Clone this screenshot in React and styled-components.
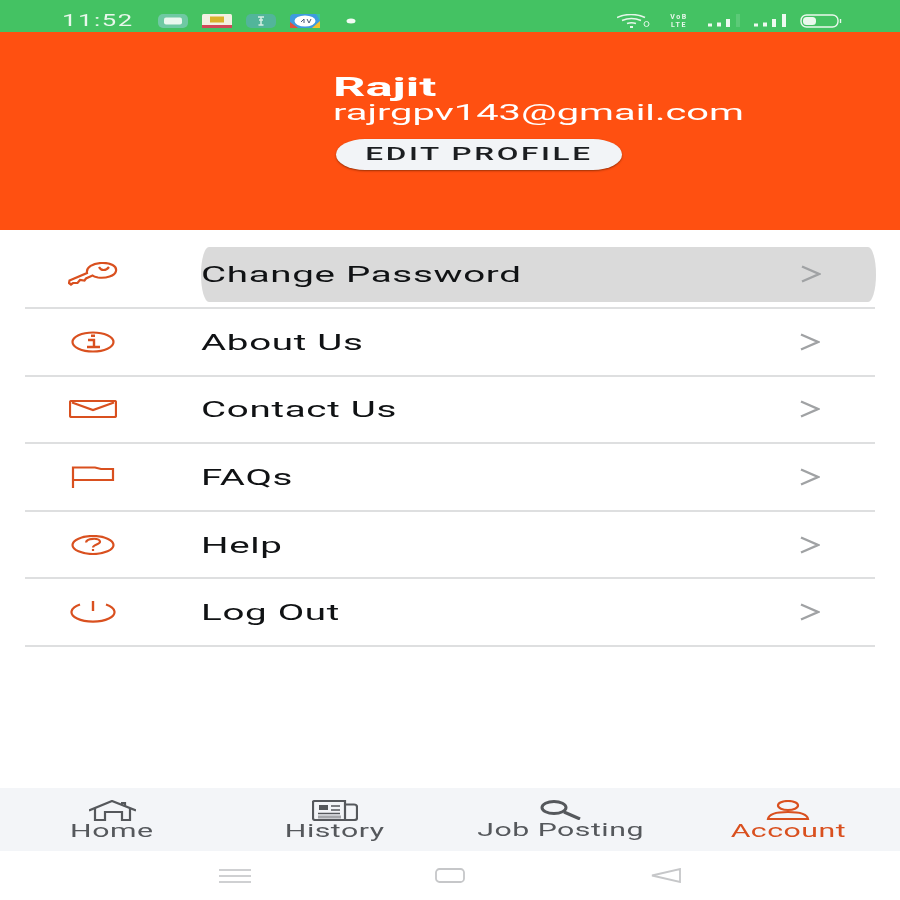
import React from 'react'
import styled, { createGlobalStyle } from 'styled-components'

const ORANGE = '#d9501f'
const GREY = '#55585c'

const Global = createGlobalStyle`
    html, body { margin: 0; padding: 0; background: #fff; }
    body { font-family: Roboto, "Liberation Sans", sans-serif; }
`

const Screen = styled.div`
    width: 900px;
    height: 900px;
    display: flex;
    flex-direction: column;
    overflow: hidden;
    background: #fff;
    filter: blur(0.45px);
`

const Wide = styled.span`
    display: inline-block;
    white-space: nowrap;
    transform: scaleX(${p => p.$x || 1.8});
    transform-origin: ${p => p.$origin || 'left center'};
`

const StatusBar = styled.div`
    height: 32px;
    flex: none;
    box-sizing: border-box;
    padding: 9px 58px 0 62px;
    display: flex;
    align-items: center;
    justify-content: space-between;
    background: #44c263;
    color: #e9f7ec;
`

const StatusLeft = styled.div`
    display: flex;
    align-items: center;
`

const StatusRight = styled.div`
    display: flex;
    align-items: center;
    gap: 14px;
`

const Clock = styled.div`
    width: 96px;
    font-size: 16px;
    letter-spacing: 1px;
`

const AppIcons = styled.div`
    display: flex;
    align-items: center;
    gap: 14px;
`

const Net = styled.div`
    width: 30px;
    font-size: 7px;
    line-height: 8px;
    font-weight: 700;
    text-align: center;
    letter-spacing: 1.5px;
`

const Profile = styled.div`
    height: 198px;
    flex: none;
    box-sizing: border-box;
    padding: 41px 0 0 333px;
    background: #ff5011;
    color: #fff;
`

const Name = styled.div`
    height: 28px;
    font-size: 26px;
    line-height: 28px;
    font-weight: 700;
`

const Email = styled.div`
    height: 24px;
    font-size: 22px;
    line-height: 24px;
`

const EditButton = styled.button`
    display: flex;
    align-items: center;
    justify-content: center;
    width: 286px;
    height: 31px;
    margin: 14px 0 0 3px;
    padding: 0 0 2px;
    border: 0;
    border-radius: 30px / 16px;
    background: #f2f4f7;
    box-shadow: 0 1px 2px rgba(90, 30, 0, 0.6);
    color: #1c1e21;
    font-family: inherit;
    font-size: 18px;
    font-weight: 500;
    letter-spacing: 1.5px;
`

const Menu = styled.div`
    flex: 1;
    padding: 11.5px 25px 0;
`

const Row = styled.div`
    height: 67.6px;
    box-sizing: border-box;
    display: flex;
    align-items: center;
    border-bottom: 2px solid #dedfe0;
`

const IconCell = styled.div`
    width: 136px;
    flex: none;
    display: flex;
    justify-content: center;
    margin-right: 40px;
`

const Content = styled.div`
    flex: 1;
    height: 55px;
    margin: 0 ${p => (p.$active ? '-1px' : '0')} 0 0;
    padding-right: 55px;
    display: flex;
    align-items: center;
    justify-content: space-between;
    background: ${p => (p.$active ? '#dadada' : 'transparent')};
    border-radius: ${p => (p.$active ? '8px / 27px' : '0')};
`

const Label = styled.div`
    padding: 1px 0 0 0;
    font-size: 22px;
    letter-spacing: 0.4px;
    color: #101214;
`

const Tabs = styled.div`
    height: 63px;
    flex: none;
    display: grid;
    grid-template-columns: 224px 222px 230px 224px;
    background: #f3f5f8;
`

const Tab = styled.div`
    padding-top: 12px;
    display: flex;
    flex-direction: column;
    align-items: center;
    color: ${p => (p.$active ? ORANGE : GREY)};
`

const TabLabel = styled.div`
    height: 20px;
    font-size: 18px;
    line-height: 20px;
    letter-spacing: 0.3px;
`

const NavBar = styled.div`
    height: 49px;
    flex: none;
    display: grid;
    grid-template-columns: repeat(3, 215px);
    justify-content: center;
    justify-items: center;
    align-items: center;
`

const stroke = { fill: 'none', stroke: ORANGE, strokeWidth: 2.2 }

const KeyIcon = () => (
    <svg width="50" height="24" viewBox="0 0 50 24" {...stroke}>
        <path d="M1.500 18.500 L19 11 C18 5 25 1.500 33 1 C43 0.500 49 4 48 9 C47 14 38 16.500 30 15.500 C27 15 25.500 14.500 24.500 13.500 L18 16.500 L16.500 18.500 L12 18 L9.500 21 L5 21 L3 22.500 L1 21 Z" />
        <path d="M31 5 C33 9 38 9 41 5" />
    </svg>
)

const InfoIcon = () => (
    <svg width="44" height="22" viewBox="0 0 44 22" {...stroke}>
        <ellipse cx="22" cy="11" rx="20.500" ry="9.500" />
        <path d="M20 4.800 H24 M17 9 H23 V15.500 M16 16 H29" strokeWidth="2.400" />
    </svg>
)

const MailIcon = () => (
    <svg width="48" height="18" viewBox="0 0 48 18" {...stroke}>
        <rect x="1" y="1" width="46" height="16" rx="1.500" />
        <path d="M3 2.500 L24 10 L45 2.500" />
    </svg>
)

const FlagIcon = () => (
    <svg width="44" height="22" viewBox="0 0 44 22" {...stroke}>
        <path d="M2 22 V1.500 H24 L30 3 H42 V14 H2" />
    </svg>
)

const HelpIcon = () => (
    <svg width="44" height="20" viewBox="0 0 44 20" {...stroke}>
        <ellipse cx="22" cy="10" rx="20.500" ry="9" />
        <path d="M15 7.500 C15.500 3 28 2.500 29 6.500 C29.500 9.500 22 9.500 22 12.500 M22 14 V16" />
    </svg>
)

const PowerIcon = () => (
    <svg width="46" height="22" viewBox="0 0 46 22" {...stroke}>
        <path d="M10 3.500 A21.500 9.500 0 1 0 36 3.500" />
        <path d="M23 0 V10" strokeWidth="2.400" />
    </svg>
)

const Chevron = () => (
    <svg width="20" height="18" viewBox="0 0 20 18" fill="none" stroke="#a0a2a4" strokeWidth="2.400">
        <path d="M1 1.500 L18 9 L1 16.500" />
    </svg>
)

const HomeIcon = ({ c }) => (
    <svg width="47" height="21" viewBox="0 0 47 21" fill="none" stroke={c} strokeWidth="2.200">
        <path d="M0 10.500 L23 1 L47 10.500" />
        <path d="M6 8 V20 H16 V12 H33 V20 H41 V8" />
        <path d="M32 3 H36 V7" />
    </svg>
)

const HistoryIcon = ({ c }) => (
    <svg width="46" height="21" viewBox="0 0 46 21" fill="none" stroke={c} strokeWidth="2.200">
        <path d="M1 2 C1 1 2 1 3 1 H33 V20 H3 C2 20 1 19 1 18 Z" />
        <path d="M33 4.500 H42 C44 4.500 45 5 45 7 V18 C45 19 44 20 42 20 H33" />
        <rect x="7" y="5" width="9" height="5" fill={c} stroke="none" />
        <path d="M19 6 H28 M19 10 H28 M6 13.500 H28" strokeWidth="1.600" />
        <rect x="6" y="15.500" width="23" height="3" fill={c} opacity="0.5" stroke="none" />
    </svg>
)

const SearchIcon = ({ c }) => (
    <svg width="42" height="20" viewBox="0 0 42 20" fill="none" stroke={c} strokeWidth="3">
        <ellipse cx="14" cy="7.500" rx="12" ry="6" />
        <path d="M24 12 L40 19" strokeWidth="3.200" />
    </svg>
)

const UserIcon = ({ c }) => (
    <svg width="44" height="21" viewBox="0 0 44 21" fill="none" stroke={c} strokeWidth="2.200">
        <ellipse cx="22" cy="5.500" rx="10" ry="4.500" />
        <path d="M2 19 C3 13 12 12 22 12 C32 12 41 13 42 19 Z" />
    </svg>
)

const Chat = () => (
    <svg width="30" height="14" viewBox="0 0 30 14">
        <rect width="30" height="14" rx="5" fill="#6fc9a3" />
        <rect x="6" y="3.500" width="18" height="7" rx="2" fill="#e9f7ee" />
    </svg>
)

const News = () => (
    <svg width="30" height="14" viewBox="0 0 30 14">
        <rect width="30" height="14" rx="1.500" fill="#f3f0e2" />
        <rect x="8" y="2.500" width="14" height="6" fill="#d9b12c" />
        <rect y="11" width="30" height="3" fill="#d0485a" />
    </svg>
)

const Gift = () => (
    <svg width="30" height="14" viewBox="0 0 30 14">
        <rect width="30" height="14" rx="5" fill="#52b59a" />
        <path d="M12 3 H18 M13 6 H17 M15 3 V11 M12.500 11 H17.500" stroke="#d6efe4" strokeWidth="1.500" />
    </svg>
)

const Browser = () => (
    <svg width="30" height="14" viewBox="0 0 30 14">
        <rect width="30" height="14" rx="4" fill="#3f9be0" />
        <path d="M26 0 H30 V7 Z" fill="#37c2a4" />
        <path d="M0 8 L8 14 H0 Z" fill="#e0513c" />
        <path d="M22 14 L30 7 V14 Z" fill="#f2c230" />
        <ellipse cx="15" cy="7" rx="10.500" ry="5.500" fill="#fff" />
        <path d="M11 8 L14 5 V9 M17 5 L19 9 L21 5" stroke="#4a5a78" fill="none" />
    </svg>
)

const Wifi = () => (
    <svg width="33" height="14" viewBox="0 0 33 14" fill="none" stroke="#e6f6ea" strokeWidth="1.500">
        <path d="M0 3.500 C8 -0.500 20 -0.500 28 3.500" />
        <path d="M5 6.500 C11 4 18 4 24 6.500" />
        <path d="M10 9.500 C13 8.500 16 8.500 19 9.500" />
        <path d="M13 13 H16" strokeWidth="2" />
        <circle cx="29.500" cy="10" r="2.500" strokeWidth="1" />
    </svg>
)

const Signal = ({ fade }) => (
    <svg width="32" height="13" viewBox="0 0 32 13" fill="#eef9f0">
        <rect y="9.500" width="4" height="3" />
        <rect x="9" y="8.500" width="4" height="4" />
        <rect x="18" y="5" width="4" height="8" />
        <rect x="28" y="0" width="4" height="13" opacity={fade ? 0.15 : 1} />
    </svg>
)

const Battery = () => (
    <svg width="42" height="14" viewBox="0 0 42 14" fill="none" stroke="#eaf8ed" strokeWidth="1.400">
        <rect x="1" y="1" width="37" height="12" rx="5.500" />
        <rect x="3" y="3" width="13" height="8" rx="3.500" fill="#eaf8ed" stroke="none" />
        <path d="M40.500 5 V9" />
    </svg>
)

const items = [
    { label: 'Change Password', Icon: KeyIcon, active: true },
    { label: 'About Us', Icon: InfoIcon },
    { label: 'Contact Us', Icon: MailIcon },
    { label: 'FAQs', Icon: FlagIcon },
    { label: 'Help', Icon: HelpIcon },
    { label: 'Log Out', Icon: PowerIcon }
]

const tabs = [
    { label: 'Home', Icon: HomeIcon },
    { label: 'History', Icon: HistoryIcon },
    { label: 'Job Posting', Icon: SearchIcon },
    { label: 'Account', Icon: UserIcon, active: true }
]

const App = () => (
    <Screen>
        <Global />
        <StatusBar>
            <StatusLeft>
                <Clock><Wide $x={1.6}>11:52</Wide></Clock>
                <AppIcons>
                    <Chat />
                    <News />
                    <Gift />
                    <Browser />
                    <svg width="10" height="6" viewBox="0 0 10 6" style={{ marginLeft: 12 }}>
                        <ellipse cx="5" cy="3" rx="4.500" ry="2.500" fill="#f2fbf4" />
                    </svg>
                </AppIcons>
            </StatusLeft>
            <StatusRight>
                <Wifi />
                <Net>VoB<br />LTE</Net>
                <Signal fade />
                <Signal />
                <Battery />
            </StatusRight>
        </StatusBar>
        <Profile>
            <Name><Wide $x={1.95}>Rajit</Wide></Name>
            <Email><Wide $x={1.81}>rajrgpv143@gmail.com</Wide></Email>
            <EditButton><Wide $x={1.75} $origin="center">EDIT PROFILE</Wide></EditButton>
        </Profile>
        <Menu>
            {items.map(({ label, Icon, active }) => (
                <Row key={label}>
                    <IconCell><Icon /></IconCell>
                    <Content $active={active}>
                        <Label><Wide $x={1.75}>{label}</Wide></Label>
                        <Chevron />
                    </Content>
                </Row>
            ))}
        </Menu>
        <Tabs>
            {tabs.map(({ label, Icon, active }) => (
                <Tab key={label} $active={active}>
                    <Icon c={active ? ORANGE : GREY} />
                    <TabLabel><Wide $x={1.68} $origin="center">{label}</Wide></TabLabel>
                </Tab>
            ))}
        </Tabs>
        <NavBar>
            <svg width="32" height="14" viewBox="0 0 32 14" stroke="#cfd0d2" strokeWidth="1.800">
                <path d="M0 1 H32 M0 7 H32 M0 13 H32" />
            </svg>
            <svg width="30" height="15" viewBox="0 0 30 15" fill="none" stroke="#c6c7c9" strokeWidth="1.800">
                <rect x="1" y="1" width="28" height="13" rx="3.500" />
            </svg>
            <svg width="31" height="15" viewBox="0 0 31 15" fill="none" stroke="#c6c7c9" strokeWidth="1.800">
                <path d="M30 1 V14 L2 7.500 Z" />
            </svg>
        </NavBar>
    </Screen>
)

export default App
